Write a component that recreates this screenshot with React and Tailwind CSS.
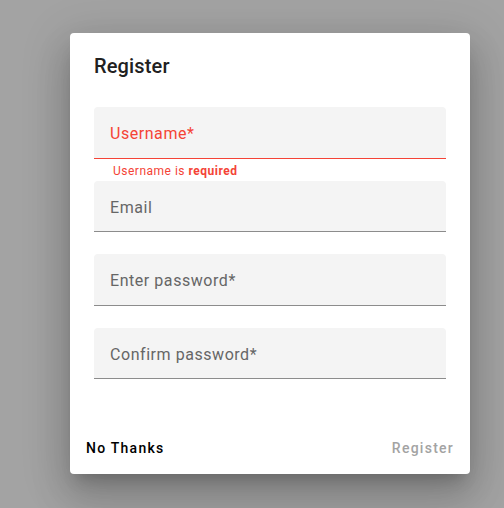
import React from "react";

function Field({ label, error }) {
  return (
    <div className="flex flex-col">
      <div
        className={`h-[51.5px] w-[352px] rounded-t-[4px] bg-[#f4f4f4] border-b flex items-center pl-4 pt-1 text-[16px] leading-6 tracking-[0.55px] ${
          error ? "border-[#f44336] text-[#f44336]" : "border-[#8c8c8c] text-[#666666]"
        }`}
      >
        {label}
      </div>
      <div className="h-[22px] pt-1 pl-[19px] text-[12px] leading-4 tracking-[0.5px] text-[#f44336]">
        {error ? (
          <span>
            Username is <span className="font-bold">required</span>
          </span>
        ) : null}
      </div>
    </div>
  );
}

export default function App() {
  return (
    <div
      className="w-[504px] h-[508px] bg-[#a3a3a3] pt-[33px] pl-[70px] overflow-hidden"
      style={{ fontFamily: "Roboto, 'Noto Sans', sans-serif" }}
    >
      <div className="w-[400px] h-[441px] bg-white rounded-[4px] flex flex-col shadow-[0_11px_15px_-7px_rgba(0,0,0,0.2),0_24px_38px_3px_rgba(0,0,0,0.14),0_9px_46px_8px_rgba(0,0,0,0.12)]">
        <div className="flex-1 px-6 pt-[17px]">
          <h2 className="text-[20px] leading-8 font-medium text-[#212121] tracking-[0.15px]">
            Register
          </h2>
          <div className="mt-[25px] flex flex-col">
            <Field label="Username*" error />
            <Field label="Email" />
            <Field label="Enter password*" />
            <Field label="Confirm password*" />
          </div>
        </div>
        <div className="p-2 flex justify-between items-center">
          <button className="h-9 px-2 text-[14px] font-medium tracking-[1.25px] text-black">
            No Thanks
          </button>
          <button className="h-9 px-2 text-[14px] font-medium tracking-[1.25px] text-[#a3a3a3]">
            Register
          </button>
        </div>
      </div>
    </div>
  );
}
